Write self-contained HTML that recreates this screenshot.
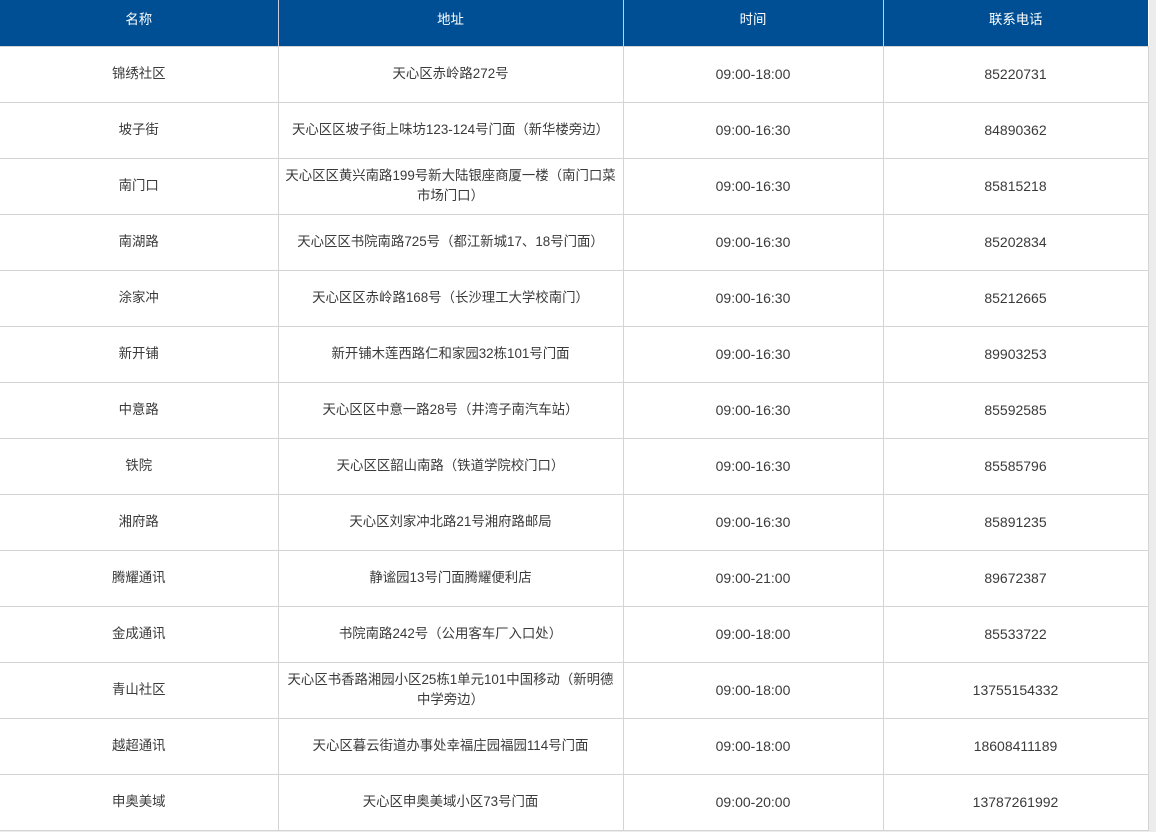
<!DOCTYPE html><html><head><meta charset="utf-8"><style>
body{margin:0;background:#ececec;font-family:"Liberation Sans","Noto Sans CJK SC",sans-serif;font-size:13.4px;color:#3a3a3a;width:1156px;height:832px;overflow:hidden}
table{position:absolute;left:0;top:0;width:1148px;border-collapse:collapse;table-layout:fixed;background:#fff}
th{background:#004f95;color:#fff;font-weight:normal;height:46px;padding:0 0 10px;box-sizing:border-box;border-left:1px solid #ccd;}
td{height:56px;text-align:center;border:1px solid #d4d4d4;padding:0 6px;line-height:20px;box-sizing:border-box}
td.n{font-size:14px}
th:first-child,td:first-child{border-left:none}
</style></head><body><table>
<colgroup><col style="width:278px"><col style="width:345px"><col style="width:260px"><col style="width:265px"></colgroup>
<tr><th>名称</th><th>地址</th><th>时间</th><th>联系电话</th></tr>
<tr><td>锦绣社区</td><td>天心区赤岭路272号</td><td class="n">09:00-18:00</td><td class="n">85220731</td></tr>
<tr><td>坡子街</td><td>天心区区坡子街上味坊123-124号门面（新华楼旁边）</td><td class="n">09:00-16:30</td><td class="n">84890362</td></tr>
<tr><td>南门口</td><td>天心区区黄兴南路199号新大陆银座商厦一楼（南门口菜市场门口）</td><td class="n">09:00-16:30</td><td class="n">85815218</td></tr>
<tr><td>南湖路</td><td>天心区区书院南路725号（都江新城17、18号门面）</td><td class="n">09:00-16:30</td><td class="n">85202834</td></tr>
<tr><td>涂家冲</td><td>天心区区赤岭路168号（长沙理工大学校南门）</td><td class="n">09:00-16:30</td><td class="n">85212665</td></tr>
<tr><td>新开铺</td><td>新开铺木莲西路仁和家园32栋101号门面</td><td class="n">09:00-16:30</td><td class="n">89903253</td></tr>
<tr><td>中意路</td><td>天心区区中意一路28号（井湾子南汽车站）</td><td class="n">09:00-16:30</td><td class="n">85592585</td></tr>
<tr><td>铁院</td><td>天心区区韶山南路（铁道学院校门口）</td><td class="n">09:00-16:30</td><td class="n">85585796</td></tr>
<tr><td>湘府路</td><td>天心区刘家冲北路21号湘府路邮局</td><td class="n">09:00-16:30</td><td class="n">85891235</td></tr>
<tr><td>腾耀通讯</td><td>静谧园13号门面腾耀便利店</td><td class="n">09:00-21:00</td><td class="n">89672387</td></tr>
<tr><td>金成通讯</td><td>书院南路242号（公用客车厂入口处）</td><td class="n">09:00-18:00</td><td class="n">85533722</td></tr>
<tr><td>青山社区</td><td>天心区书香路湘园小区25栋1单元101中国移动（新明德中学旁边）</td><td class="n">09:00-18:00</td><td class="n">13755154332</td></tr>
<tr><td>越超通讯</td><td>天心区暮云街道办事处幸福庄园福园114号门面</td><td class="n">09:00-18:00</td><td class="n">18608411189</td></tr>
<tr><td>申奥美域</td><td>天心区申奥美域小区73号门面</td><td class="n">09:00-20:00</td><td class="n">13787261992</td></tr>
</table></body></html>
